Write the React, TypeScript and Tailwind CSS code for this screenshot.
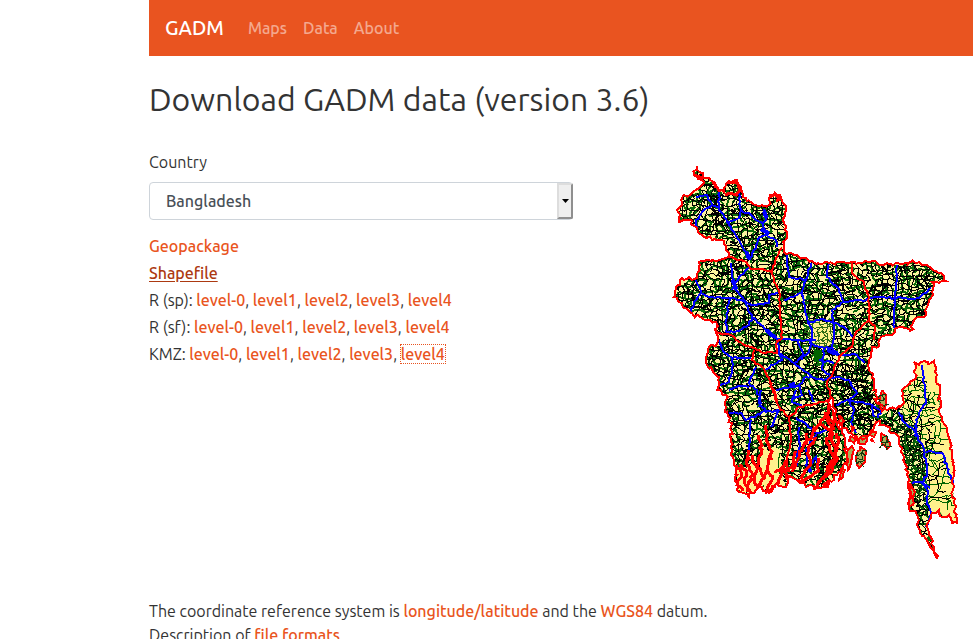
import React from "react";

type Point = [number, number];

/* Small deterministic generator, so that the map is the same on every render. */
function seeded(seed: number) {
  let s = seed;
  return () => {
    s = (s * 1664525 + 1013904223) % 4294967296;
    return s / 4294967296;
  };
}

function parse(text: string): Point[] {
  return text.split(" ").map((pair) => pair.split(",").map(Number) as Point);
}

/* Splits each segment in short steps and shakes them, as a surveyed border. */
function rough(text: string, seed: number, amount = 1.6, step = 4) {
  const rand = seeded(seed);
  const points = parse(text);
  let d = `M${points[0][0]} ${points[0][1]}`;
  for (let i = 1; i < points.length; i++) {
    const [x0, y0] = points[i - 1];
    const [x1, y1] = points[i];
    const n = Math.max(1, Math.round(Math.hypot(x1 - x0, y1 - y0) / step));
    for (let k = 1; k <= n; k++) {
      const t = k / n;
      const j = k === n ? 0 : amount;
      d += `L${(x0 + (x1 - x0) * t + (rand() - 0.5) * 2 * j).toFixed(1)} ${(y0 + (y1 - y0) * t + (rand() - 0.5) * 2 * j).toFixed(1)}`;
    }
  }
  return d;
}

/* Irregular cells inside a rectangle, with bent edges; keep is the share of edges drawn. */
function mesh(x: number, y: number, w: number, h: number, size: number, keep: number, seed: number) {
  const rand = seeded(seed);
  const cols = Math.ceil(w / size) + 1;
  const rows = Math.ceil(h / size) + 1;
  const at: Point[][] = [];
  for (let r = 0; r < rows; r++) {
    at.push([]);
    for (let c = 0; c < cols; c++) {
      const shift = r % 2 === 0 ? 0 : 0.5;
      at[r].push([x + (c - shift + (rand() - 0.5) * 0.8) * size, y + (r + (rand() - 0.5) * 0.8) * size]);
    }
  }
  let d = "";
  const edge = (a: Point, b: Point) => {
    const mx = (a[0] + b[0]) / 2 + (rand() - 0.5) * size * 0.6;
    const my = (a[1] + b[1]) / 2 + (rand() - 0.5) * size * 0.6;
    if (rand() < keep) {
      d += `M${a[0].toFixed(1)} ${a[1].toFixed(1)}L${mx.toFixed(1)} ${my.toFixed(1)}L${b[0].toFixed(1)} ${b[1].toFixed(1)}`;
    }
  };
  for (let r = 0; r < rows - 1; r++) {
    for (let c = 0; c < cols - 1; c++) {
      edge(at[r][c], at[r][c + 1]);
      edge(at[r][c], at[r + 1][c]);
    }
  }
  return d;
}

const MAINLAND =
  "698,166 702,173 713,181 720,190 725,192 730,181 738,180 742,190 748,201 760,206 770,205 771,195 776,193 782,198 787,210 785,223 788,232 785,247 787,254 803,258 823,264 847,263 870,262 892,264 920,262 932,268 942,273 947,281 940,283 933,282 934,295 928,307 927,315 917,318 911,331 900,327 893,335 882,337 880,346 873,347 872,357 870,363 875,383 878,403 888,410 897,409 905,403 903,390 917,378 915,362 920,365 925,361 929,364 935,361 937,370 941,392 940,412 948,430 953,458 955,467 954,490 958,523 953,523 950,515 944,517 940,510 932,515 928,527 930,535 935,547 938,558 932,548 921,530 918,515 910,507 912,492 908,467 902,447 900,438 885,425 877,422 872,433 867,438 858,440 852,433 843,427 837,418 832,397 829,402 835,417 845,435 848,457 840,472 825,487 807,487 793,477 787,478 787,487 778,483 770,493 760,487 750,497 738,490 737,467 733,450 732,427 727,407 727,395 718,390 720,377 708,365 709,350 718,343 717,322 707,320 692,313 675,297 683,278 698,278 700,262 717,261 732,257 727,250 722,240 707,238 698,228 690,220 680,222 679,212 683,198 697,190 705,182 695,175 698,166";

const HILLS =
  "915,362 920,365 925,361 929,364 935,361 937,370 941,392 940,412 948,430 953,458 955,467 954,490 958,523 953,523 950,515 944,517 940,510 932,515 928,500 928,473 926,448 917,433 903,413 905,403 903,390 917,378 915,362";

const RED_LINES = [
  "732,257 745,261 752,269 763,269 773,272 777,258 783,248",
  "773,272 775,280 780,290 782,320 783,338 778,341 778,353 766,353 755,348 745,345 735,337 718,332",
  "755,350 753,360 762,366 770,378 774,392 780,407 790,417 792,440 788,460 787,478",
  "771,382 776,392 778,403",
  "790,417 800,407 815,404 830,400 832,397 828,382 835,370 840,357 853,347 857,332 870,320 870,297 865,282 853,273 853,263",
  "870,320 876,326 875,340",
];

const BLUE_LINES = [
  "697,197 708,195 713,205 705,210 697,220 698,228",
  "713,205 720,207",
  "720,191 720,207 728,222 735,232 745,250 751,258 757,248 761,237 767,234 764,223 742,210 740,193",
  "728,222 740,218 742,210",
  "765,209 767,220 764,223",
  "767,234 777,240 778,247",
  "732,263 733,277 738,289",
  "750,268 740,277 733,290",
  "788,255 790,277 807,280 812,263",
  "697,280 702,293 695,302 692,312",
  "702,293 713,297 732,298 747,302 757,305 770,303 770,295 780,292",
  "733,280 737,290 747,302",
  "732,298 728,307 727,332",
  "727,332 735,332 750,325 753,317 767,330 778,339 797,340 817,340",
  "747,302 753,317",
  "785,300 803,293 808,317 813,333 810,352 795,363",
  "803,293 806,281",
  "798,340 803,350 803,360",
  "779,341 780,353 795,363 813,377 825,380 840,377 850,380 858,393 850,400 837,405",
  "780,353 783,360 765,370",
  "720,340 725,352 733,358 752,358",
  "733,358 733,370 730,382 720,386",
  "757,367 750,383 758,390 762,403 760,407",
  "730,390 740,386 750,387",
  "777,390 800,385 803,395 793,400",
  "813,377 807,377 800,385",
  "830,263 828,277 838,287 845,302 867,300 878,297 897,298 920,298 932,288",
  "898,265 897,287 895,328",
  "845,302 833,310 835,327 833,347 840,355",
  "810,323 823,319 835,323 843,326 855,337",
  "810,343 825,348 833,348",
  "825,348 823,369 832,377",
  "840,355 858,355 865,363",
  "820,360 835,363",
  "850,400 873,405 875,417",
  "873,405 882,410 879,418",
  "850,400 855,410 852,422 857,433",
  "923,365 925,383 927,403 917,420 917,437",
  "900,412 905,422 917,433 925,450 928,473 923,483 929,491 928,500 932,512 927,527",
  "927,452 943,453 948,467 954,483",
  "913,483 923,482 931,488",
  "762,390 760,403 767,412 780,410 772,427",
  "730,413 742,413 747,420 767,411",
  "752,420 750,450",
  "797,390 793,402 803,405",
  "797,418 808,425 818,433 807,450 808,470 817,457 820,466",
  "800,427 800,450 797,467",
  "810,390 815,402",
  "818,433 828,430",
];

const THICK_BLUE = [
  "829,349 839,355",
  "765,211 768,218",
  "747,252 752,259",
  "767,330 777,338",
  "790,386 796,384",
  "762,229 770,234",
  "809,466 812,472",
];

const DELTA_RED = [
  "737,465 742,472 738,485 744,491",
  "750,450 748,465 754,475 748,492",
  "741,464 748,471 746,484 752,493",
  "759,435 763,450 759,465 765,478 758,488",
  "767,425 768,437 773,452 769,465 765,478",
  "753,455 758,470 755,481 761,488",
  "768,470 773,480 768,492 777,486",
  "776,473 783,468 780,484",
  "787,460 785,470 790,478",
  "808,433 804,447 800,457 794,472",
  "817,437 809,452 812,463 802,479",
  "826,412 835,422 832,438 837,450 832,466 824,478 816,488",
  "823,424 833,432 828,443 835,457 827,472",
  "828,412 821,424 814,432 806,444",
  "820,458 818,472 806,480 798,480",
  "838,433 838,460 831,473 824,480",
  "830,405 828,418 834,430",
  "797,451 794,464 790,472",
];

const ISLANDS = [
  "883,390 887,395 887,405 883,411 880,403 883,390",
  "882,433 888,437 891,445 888,449 883,444 882,433",
  "861,446 867,451 866,462 860,468 857,461 861,446",
  "851,436 856,438 855,443 850,441 851,436",
  "848,451 853,446 855,450 852,463 849,470 848,451",
  "842,468 846,470 844,477 840,480 842,468",
  "872,430 877,432 875,437 871,435 872,430",
  "861,438 869,436 866,444 859,443 861,438",
  "911,483 915,490 914,505 910,506 911,483",
  "824,485 831,480 829,487 824,485",
  "840,415 845,421 841,425 840,415",
  "871,440 873,439 874,441 871,440",
  "852,426 855,428 853,431 852,426",
];

const OUTLINE = rough(MAINLAND, 7, 2, 3);

function BangladeshMap() {
  return (
    <svg
      viewBox="670 160 295 405"
      width="295"
      height="405"
      shapeRendering="crispEdges"
      fill="none"
      role="img"
      aria-label="Bangladesh"
      className="block shrink-0"
    >
      <defs>
        <clipPath id="mainland">
          <path d={OUTLINE} />
        </clipPath>
        <clipPath id="hills">
          <path d={rough(HILLS, 4, 0)} />
        </clipPath>
      </defs>
      <g clipPath="url(#mainland)">
        <rect x="670" y="160" width="295" height="405" fill="#fbf3a0" />
        <path d={mesh(670, 160, 295, 400, 6, 0.65, 11)} stroke="#0b6a0b" strokeWidth="2" />
        <path d={mesh(670, 160, 295, 400, 5, 0.85, 23)} stroke="#000" strokeWidth="1" />
        <path d={mesh(670, 160, 295, 400, 7, 0.1, 31)} stroke="#000" strokeWidth="2" />
        <path d={mesh(840, 365, 35, 60, 5, 0.7, 37)} stroke="#000" strokeWidth="1" />
        <path d={mesh(898, 425, 26, 75, 4, 0.8, 41)} stroke="#0a4a0a" strokeWidth="1" />
        <path d="M815 350h8v12h-8z" fill="#006400" />
        <path d="M811 323l8-3 14 5 1 12-4 9-8 1-11-5z" fill="#fff08c" />
        <path d={mesh(809, 320, 26, 28, 4, 0.8, 53)} stroke="#2f6b16" />
        <path d="M796 294l5-2 3 9-6-1z" fill="#fff08c" />
        <path d="M763 445l7 6 3-4 8 2 2 20 2 16-15 8-5-8-12 9-14-4-1-23 8 3 8-9 7 6z" fill="#fff08c" />
        <path d="M781 453l-2 9 2 12" stroke="#006400" />
      </g>
      <g clipPath="url(#hills)">
        <rect x="890" y="355" width="75" height="175" fill="#fff08c" />
        <path d={mesh(894, 380, 50, 75, 6, 0.75, 61)} stroke="#006400" />
        <path d={mesh(896, 382, 42, 75, 7, 0.6, 67)} stroke="#000" />
        <path d={mesh(922, 450, 32, 60, 9, 0.75, 71)} stroke="#006400" />
        <path d={mesh(922, 445, 28, 60, 9, 0.5, 73)} stroke="#000" />
        <path d="M927 360h15l-2 32h-12zM942 448l9-10 6 45-7-14z" fill="#fff08c" />
      </g>
      {BLUE_LINES.map((line, i) => (
        <path key={line} d={rough(line, i + 80, 1, 3)} stroke="#00f" strokeWidth="2" />
      ))}
      {THICK_BLUE.map((line, i) => (
        <path key={line} d={rough(line, i + 140, 1, 3)} stroke="#00f" strokeWidth="4" />
      ))}
      {ISLANDS.map((line, i) => (
        <path key={line} d={rough(line, i + 200, 1, 3)} fill="#a8b05c" stroke="#f00" strokeWidth="2" />
      ))}
      <path d={mesh(881, 396, 6, 12, 4, 0.8, 91) + mesh(884, 437, 5, 9, 4, 0.8, 93) + mesh(859, 451, 6, 13, 4, 0.8, 95)} stroke="#12380c" />
      {RED_LINES.map((line, i) => (
        <path key={line} d={rough(line, i + 300, 1, 3)} stroke="#f00" strokeWidth="2" />
      ))}
      {DELTA_RED.map((line, i) => (
        <path key={line} d={rough(line, i + 400, 1.6, 3)} stroke="#f00" strokeWidth="3" />
      ))}
      <path d={OUTLINE} stroke="#f00" strokeWidth="2" />
      <path d="M729 182l9 0 3 8-4 5-6-2-5 2M771 197l5-3 5 5-4 2M714 182l5 7 2 3M695 175l9 3" stroke="#f00" strokeWidth="3" />
    </svg>
  );
}

const linkClass = "font-medium text-[#e95420] hover:text-[#ac3911] hover:underline";
const LEVELS = ["level-0", "level1", "level2", "level3", "level4"];

function LevelRow({ label, outlined = false }: { label: string; outlined?: boolean }) {
  return (
    <li>
      {label}:{" "}
      {LEVELS.map((level, i) => (
        <React.Fragment key={level}>
          {i > 0 && ", "}
          <a
            href="#"
            className={
              outlined && i === LEVELS.length - 1
                ? "font-medium text-[#e95420] outline-1 outline-dotted outline-[#e95420]"
                : linkClass
            }
          >
            {level}
          </a>
        </React.Fragment>
      ))}
    </li>
  );
}

export default function App() {
  return (
    <div className="h-screen overflow-hidden bg-white pl-[149px] font-['Ubuntu','Noto_Sans',sans-serif] text-base leading-6 text-[#333333]">
      <nav className="flex h-14 items-center gap-6 bg-[#e95420] px-4">
        <a href="#" className="text-xl font-medium text-white">
          GADM
        </a>
        <div className="flex gap-4 font-medium text-white/50">
          <a href="#">Maps</a>
          <a href="#">Data</a>
          <a href="#">About</a>
        </div>
      </nav>

      <main>
        <h1 className="pt-[23px] text-[32px] leading-10">Download GADM data (version 3.6)</h1>

        <div className="mt-[31px] flex h-[449px] items-start">
          <div className="w-[424px] shrink-0">
            <label htmlFor="country" className="block">
              Country
            </label>
            <div className="relative mt-2">
              <select
                id="country"
                defaultValue="Bangladesh"
                className="block h-[38px] w-full appearance-none rounded border border-[#ced4da] bg-white px-4 font-medium text-[#495057]"
              >
                <option>Bangladesh</option>
              </select>
              <span className="pointer-events-none absolute top-px right-0 bottom-px flex w-4 items-center justify-center rounded-r-xs border-2 border-t-[#dddddd] border-r-[#8f8f8f] border-b-[#8f8f8f] border-l-[#dddddd] bg-[#efefef]">
                <svg width="7" height="4" viewBox="0 0 7 4" aria-hidden="true">
                  <path d="M0 0h7L3.500 4z" fill="#000" />
                </svg>
              </span>
            </div>
            <ul className="mt-[13px] leading-[27px]">
              <li>
                <a href="#" className={linkClass}>
                  Geopackage
                </a>
              </li>
              <li>
                <a href="#" className="font-medium text-[#ac3911] underline underline-offset-2">
                  Shapefile
                </a>
              </li>
              <LevelRow label="R (sp)" />
              <LevelRow label="R (sf)" />
              <LevelRow label="KMZ" outlined />
            </ul>
          </div>
          <div className="pt-[10px] pl-24">
            <BangladeshMap />
          </div>
        </div>

        <p>
          The coordinate reference system is{" "}
          <a href="#" className={linkClass}>
            longitude/latitude
          </a>{" "}
          and the{" "}
          <a href="#" className={linkClass}>
            WGS84
          </a>{" "}
          datum.
          <br />
          Description of{" "}
          <a href="#" className={linkClass}>
            file formats
          </a>
          .
        </p>
      </main>
    </div>
  );
}
